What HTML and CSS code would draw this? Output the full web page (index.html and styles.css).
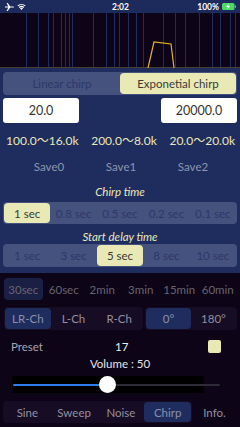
FILE: index.html
```html
<!DOCTYPE html>
<html>
<head>
<meta charset="utf-8">
<link rel="stylesheet" href="styles.css">
</head>
<body>
<div class="status">
  <div class="st-left">
    <svg width="9" height="8" viewBox="0 0 9 8"><path d="M0 3.4h3.3L1.6 0h1.1l2.6 3.4H8a1 .6 0 0 1 0 1.2H5.3L2.7 8H1.6l1.7-3.4H0z" fill="#fff"/></svg>
    <svg width="9" height="7" viewBox="0 0 9 7"><path d="M4.5 7 3 5.3a2.2 2.2 0 0 1 3 0z M1.8 4.1a4 4 0 0 1 5.4 0L6.5 4.9a3 3 0 0 0-4 0z M0.4 2.5a6 6 0 0 1 8.2 0L7.9 3.3a5 5 0 0 0-6.8 0z" fill="#fff"/></svg>
  </div>
  <div class="st-time">2:02</div>
  <div class="st-right">
    <span>100%</span>
    <svg width="14" height="7" viewBox="0 0 14 7"><rect x="0" y="0" width="12.5" height="7" rx="1.5" fill="#4cd964"/><rect x="12.8" y="2.2" width="1.2" height="2.6" rx=".5" fill="#4cd964"/><path d="M6.8 0.8 4 4h2l-.8 2.4L8.2 3h-2z" fill="#fff"/></svg>
  </div>
</div>
<div class="graph">
  <svg width="240" height="55" viewBox="0 0 240 55">
    <g stroke="#1c2d62" stroke-width="1">
      <line x1="26.5" y1="0" x2="26.5" y2="54"/><line x1="38.5" y1="0" x2="38.5" y2="54"/>
      <line x1="48.5" y1="0" x2="48.5" y2="54"/><line x1="53.5" y1="0" x2="53.5" y2="54"/>
      <line x1="61.5" y1="0" x2="61.5" y2="54"/><line x1="65.5" y1="0" x2="65.5" y2="54"/>
      <line x1="69.5" y1="0" x2="69.5" y2="54"/><line x1="72.5" y1="0" x2="72.5" y2="54"/>
      <line x1="93.5" y1="0" x2="93.5" y2="54"/><line x1="106.5" y1="0" x2="106.5" y2="54"/>
      <line x1="114.5" y1="0" x2="114.5" y2="54"/><line x1="119.5" y1="0" x2="119.5" y2="54"/>
      <line x1="128.5" y1="0" x2="128.5" y2="54"/><line x1="136.5" y1="0" x2="136.5" y2="54"/>
      <line x1="143.5" y1="0" x2="143.5" y2="54"/><line x1="163.5" y1="0" x2="163.5" y2="54"/>
      <line x1="175.5" y1="0" x2="175.5" y2="54"/><line x1="185.5" y1="0" x2="185.5" y2="54"/>
      <line x1="199.5" y1="0" x2="199.5" y2="54"/><line x1="212.5" y1="0" x2="212.5" y2="54"/>
      <line x1="220.5" y1="0" x2="220.5" y2="54"/><line x1="230.5" y1="0" x2="230.5" y2="54"/>
      <line x1="235.5" y1="0" x2="235.5" y2="54"/>
    </g>
    <line x1="0" y1="54.5" x2="240" y2="54.5" stroke="#4a4030" stroke-width="1"/>
    <polyline points="148,55 154,29 171,31 174,55" fill="none" stroke="#e6b42a" stroke-width="1.2"/>
  </svg>
</div>
<div class="panel">
  <div class="seg seg-top">
    <div class="seg-item">Linear chirp</div>
    <div class="seg-item on">Exponetial chirp</div>
  </div>
  <div class="inputs">
    <div class="field">20.0</div>
    <div class="field">20000.0</div>
  </div>
  <div class="ranges">
    <span>100.0〜16.0k</span><span>200.0〜8.0k</span><span>20.0〜20.0k</span>
  </div>
  <div class="saves">
    <span>Save0</span><span>Save1</span><span>Save2</span>
  </div>
  <div class="label l1">Chirp time</div>
  <div class="seg seg-sm">
    <div class="seg-item on">1 sec</div>
    <div class="seg-item">0.8 sec</div>
    <div class="seg-item">0.5 sec</div>
    <div class="seg-item">0.2 sec</div>
    <div class="seg-item">0.1 sec</div>
  </div>
  <div class="label l2">Start delay time</div>
  <div class="seg seg-sm">
    <div class="seg-item">1 sec</div>
    <div class="seg-item">3 sec</div>
    <div class="seg-item on">5 sec</div>
    <div class="seg-item">8 sec</div>
    <div class="seg-item">10 sec</div>
  </div>
</div>
<div class="dark">
  <div class="times">
    <div class="t on">30sec</div><div class="t">60sec</div><div class="t">2min</div>
    <div class="t">3min</div><div class="t">15min</div><div class="t">60min</div>
  </div>
  <div class="chrow">
    <div class="dseg ch">
      <div class="d on">LR-Ch</div><div class="d">L-Ch</div><div class="d">R-Ch</div>
    </div>
    <div class="dseg ph">
      <div class="d on">0°</div><div class="d">180°</div>
    </div>
  </div>
  <div class="preset">
    <span class="p-label">Preset</span>
    <span class="p-num">17</span>
    <span class="p-box"></span>
  </div>
  <div class="volume">Volume : 50</div>
  <div class="slider">
    <div class="s-bg"></div>
    <div class="s-rest"></div>
    <div class="s-fill"></div>
    <div class="s-thumb"></div>
  </div>
  <div class="tabs">
    <div class="dseg tabgrp">
      <div class="d">Sine</div><div class="d">Sweep</div><div class="d">Noise</div><div class="d on">Chirp</div>
    </div>
    <div class="d info">Info.</div>
  </div>
</div>
</body>
</html>
```
FILE: styles.css
```css
* { box-sizing: border-box; }
html, body { margin: 0; padding: 0; }
body {
  width: 240px;
  height: 427px;
  overflow: hidden;
  background: #0d0418;
  font-family: Lato, "Noto Sans", "Noto Sans CJK JP", sans-serif;
}
.status {
  height: 13px;
  background: #1d2b5c;
  display: flex;
  align-items: center;
  justify-content: space-between;
  padding: 0 4px 0 5px;
  color: #fff;
  font-size: 8.5px;
  font-weight: 700;
}
.st-left { display: flex; gap: 3px; align-items: center; width: 60px; }
.st-time { flex: 1; text-align: center; }
.st-right { display: flex; gap: 3px; align-items: center; width: 60px; justify-content: flex-end; }
.graph { height: 55px; background: #0d0418; }
.graph svg { display: block; }
.panel {
  background: #1f2d5e;
  height: 205px;
  padding: 4px 3px 0 3px;
}
.seg {
  display: flex;
  background: #46527e;
  border-radius: 4px;
  padding: 1px;
}
.seg-item {
  flex: 1;
  display: flex;
  align-items: center;
  justify-content: center;
  color: #2c3868;
  border-radius: 4px;
}
.seg-item.on { background: #e8e9b4; color: #3a3a3a; }
.seg-top { height: 23px; font-size: 11.5px; }
.seg-sm { height: 22px; font-size: 11.5px; }
.inputs {
  display: flex;
  justify-content: space-between;
  margin-top: 3px;
  height: 25px;
}
.field {
  width: 76px;
  background: #fff;
  border-radius: 3px;
  color: #333;
  font-size: 12.5px;
  display: flex;
  align-items: center;
  justify-content: center;
}
.ranges {
  height: 30px;
  display: flex;
  justify-content: space-between;
  align-items: center;
  color: #e8e8b8;
  font-size: 12px;
  padding: 2px 2px 0 3px;
}
.saves {
  height: 27px;
  display: flex;
  justify-content: space-around;
  align-items: center;
  color: #8e94ac;
  font-size: 11.5px;
  padding: 0 8px 0 10px;
}
.label {
  text-align: center;
  color: #e8e8b8;
  font-style: italic;
  font-size: 11.5px;
  display: flex;
  align-items: center;
  justify-content: center;
}
.l1 { height: 22px; }
.l2 { height: 20px; padding-top: 4px; }
.seg-sm + .label + .seg-sm { height: 23px; }
.dark { padding: 5px 3px 0 3px; }
.times {
  display: flex;
  height: 22px;
}
.t {
  flex: 1;
  display: flex;
  align-items: center;
  justify-content: center;
  color: #67646f;
  font-size: 11.5px;
  border-radius: 4px;
}
.t.on { background: #1a1f44; margin-left: 1px; margin-right: 2px; }
.chrow {
  display: flex;
  justify-content: space-between;
  height: 23px;
  margin-top: 7px;
}
.dseg {
  display: flex;
  background: #160d24;
  border-radius: 4px;
  padding: 1px;
}
.ch { width: 139px; margin-left: 1px; }
.ph { width: 92px; }
.d {
  flex: 1;
  display: flex;
  align-items: center;
  justify-content: center;
  color: #938fa0;
  font-size: 11.5px;
  border-radius: 4px;
}
.d.on { background: #1f2d5e; color: #8a90ac; }
.preset {
  display: flex;
  align-items: center;
  height: 20px;
  margin-top: 6px;
  padding: 0 16px 0 8px;
  color: #a8a4b0;
  font-size: 11.5px;
}
.p-label { width: 101px; }
.p-num { flex: 1; color: #eee; padding-left: 3px; }
.p-box {
  width: 13px;
  height: 13px;
  background: #e8e9b4;
  border-radius: 2px;
}
.volume {
  height: 16px;
  text-align: center;
  color: #e4e4e4;
  font-size: 11.5px;
  line-height: 16px;
}
.slider {
  position: relative;
  height: 20px;
  margin-top: 2px;
}
.s-bg { position: absolute; left: 9px; top: 2px; width: 192px; height: 17px; background: #000; }
.s-rest { position: absolute; left: 105px; top: 10px; width: 112px; height: 2px; background: #2e2a36; border-radius: 1px; }
.s-fill { position: absolute; left: 10px; top: 10px; width: 96px; height: 2px; background: #2f7bf0; border-radius: 1px; }
.s-thumb { position: absolute; left: 96px; top: 2px; width: 17px; height: 17px; background: #fff; border-radius: 50%; }
.tabs {
  display: flex;
  height: 22px;
  margin-top: 7px;
}
.tabgrp { width: 189px; }
.info { flex: 1; }
```
